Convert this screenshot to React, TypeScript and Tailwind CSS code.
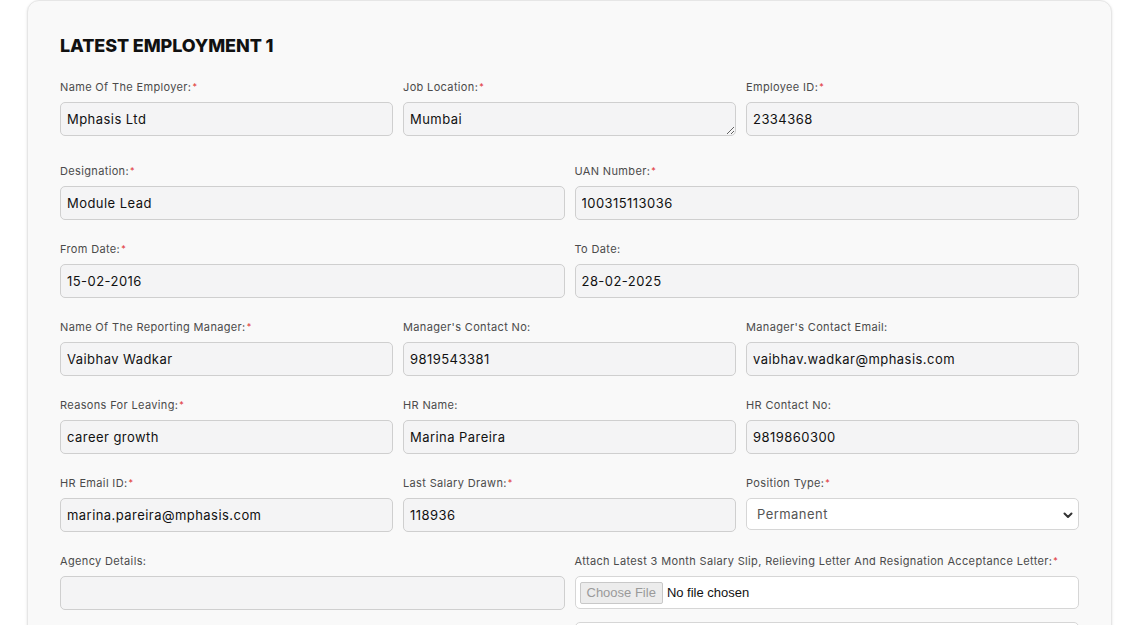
import type { ReactNode } from "react";

const FONT = { fontFamily: "Inter, 'Noto Sans', sans-serif" };

function Label({ text, required }: { text: string; required?: boolean }) {
  return (
    <label className="mb-[7px] block text-[11px] leading-4 tracking-[0.35px] text-[#4b4b4b]">
      {text}
      {required && <span className="ml-px text-[9px] align-top text-[#e03131]">*</span>}
    </label>
  );
}

function Field({ label, required, children }: { label: string; required?: boolean; children: ReactNode }) {
  return (
    <div className="flex flex-col">
      <Label text={label} required={required} />
      {children}
    </div>
  );
}

function TextBox({ value }: { value: string }) {
  return (
    <input
      readOnly
      value={value}
      className="h-[34px] w-full rounded-[5px] border border-[#cfcfcf] bg-[#f4f4f5] px-[6px] text-[13px] tracking-[0.45px] text-[#111] outline-none"
    />
  );
}

export default function App() {
  return (
    <div className="min-h-screen bg-white" style={FONT}>
      <div className="ml-[27px] w-[1085px] rounded-t-xl border border-[#e6e6e6] bg-[#f9f9f9] px-[32px] pt-[31px] pb-10 shadow-sm">
        <h2 className="mb-[20px] text-[18px] font-extrabold leading-[27px] tracking-[-0.1px] text-[#111]">
          LATEST EMPLOYMENT 1
        </h2>

        <div className="flex flex-col gap-[21px]">
          {/* Row 1 */}
          <div className="mb-[6px] grid grid-cols-3 gap-x-[10px]">
            <Field label="Name Of The Employer:" required>
              <TextBox value="Mphasis Ltd" />
            </Field>
            <Field label="Job Location:" required>
              <textarea
                readOnly
                rows={1}
                value="Mumbai"
                className="block h-[34px] w-full resize-y rounded-[5px] border border-[#cfcfcf] bg-[#f4f4f5] px-[6px] py-[6px] text-[13px] leading-[20px] tracking-[0.45px] text-[#111] outline-none"
              />
            </Field>
            <Field label="Employee ID:" required>
              <TextBox value="2334368" />
            </Field>
          </div>

          {/* Row 2 */}
          <div className="grid grid-cols-2 gap-x-[10px]">
            <Field label="Designation:" required>
              <TextBox value="Module Lead" />
            </Field>
            <Field label="UAN Number:" required>
              <TextBox value="100315113036" />
            </Field>
          </div>

          {/* Row 3 */}
          <div className="grid grid-cols-2 gap-x-[10px]">
            <Field label="From Date:" required>
              <TextBox value="15-02-2016" />
            </Field>
            <Field label="To Date:">
              <TextBox value="28-02-2025" />
            </Field>
          </div>

          {/* Row 4 */}
          <div className="grid grid-cols-3 gap-x-[10px]">
            <Field label="Name Of The Reporting Manager:" required>
              <TextBox value="Vaibhav Wadkar" />
            </Field>
            <Field label="Manager's Contact No:">
              <TextBox value="9819543381" />
            </Field>
            <Field label="Manager's Contact Email:">
              <TextBox value="vaibhav.wadkar@mphasis.com" />
            </Field>
          </div>

          {/* Row 5 */}
          <div className="grid grid-cols-3 gap-x-[10px]">
            <Field label="Reasons For Leaving:" required>
              <TextBox value="career growth" />
            </Field>
            <Field label="HR Name:">
              <TextBox value="Marina Pareira" />
            </Field>
            <Field label="HR Contact No:">
              <TextBox value="9819860300" />
            </Field>
          </div>

          {/* Row 6 */}
          <div className="grid grid-cols-3 gap-x-[10px]">
            <Field label="HR Email ID:" required>
              <TextBox value="marina.pareira@mphasis.com" />
            </Field>
            <Field label="Last Salary Drawn:" required>
              <TextBox value="118936" />
            </Field>
            <Field label="Position Type:" required>
              <div className="relative h-[32px] w-full rounded-[5px] border border-[#d6d6d6] bg-white">
                <span className="absolute left-[10px] top-[7px] text-[13px] leading-4 tracking-[0.45px] text-[#555]">Permanent</span>
                <svg
                  className="absolute right-[4px] top-[10px]"
                  width="12"
                  height="12"
                  viewBox="0 0 12 12"
                  fill="none"
                  stroke="#333"
                  strokeWidth="2"
                  strokeLinecap="round"
                  strokeLinejoin="round"
                >
                  <path d="M2.5 4.5 6 8l3.5-3.5" />
                </svg>
              </div>
            </Field>
          </div>

          {/* Row 7 */}
          <div className="grid grid-cols-2 gap-x-[10px]">
            <Field label="Agency Details:">
              <div className="h-[34px] w-full rounded-[5px] border border-[#cfcfcf] bg-[#f4f4f5]" />
            </Field>
            <div className="flex flex-col">
              <Label text="Attach Latest 3 Month Salary Slip, Relieving Letter And Resignation Acceptance Letter:" required />
              <div className="flex h-[33px] w-full items-center rounded-[5px] border border-[#d6d6d6] bg-white px-[4px]">
                <span
                  className="rounded-[2px] border border-[#c8c8c8] bg-[#ececec] px-[6px] py-[2px] text-[13px] leading-4 text-[#9a9a9a]"
                  style={{ fontFamily: "'Liberation Sans', Arial, sans-serif" }}
                >
                  Choose File
                </span>
                <span
                  className="ml-[4px] text-[13px] text-[#111]"
                  style={{ fontFamily: "'Liberation Sans', Arial, sans-serif" }}
                >
                  No file chosen
                </span>
              </div>
              <div className="mt-[13px] h-[34px] w-full rounded-[5px] border border-[#d6d6d6] bg-white" />
            </div>
          </div>
        </div>
      </div>
    </div>
  );
}
